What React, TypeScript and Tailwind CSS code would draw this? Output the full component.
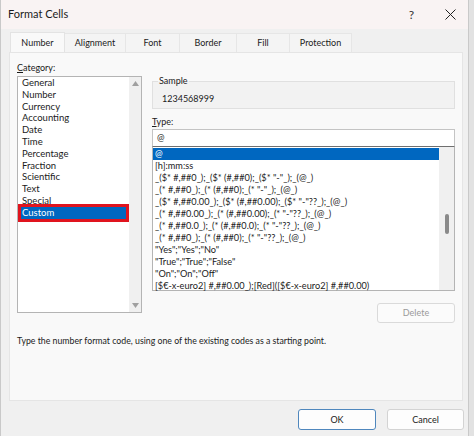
import React from "react";

const categories = [
  "General",
  "Number",
  "Currency",
  "Accounting",
  "Date",
  "Time",
  "Percentage",
  "Fraction",
  "Scientific",
  "Text",
  "Special",
  "Custom",
];

const formats = [
  "@",
  "[h]:mm:ss",
  '_($* #,##0_);_($* (#,##0);_($* "-"_);_(@_)',
  '_(* #,##0_);_(* (#,##0);_(* "-"_);_(@_)',
  '_($* #,##0.00_);_($* (#,##0.00);_($* "-"??_);_(@_)',
  '_(* #,##0.00_);_(* (#,##0.00);_(* "-"??_);_(@_)',
  '_(* #,##0.0_);_(* (#,##0.0);_(* "-"??_);_(@_)',
  '_(* #,##0_);_(* (#,##0);_(* "-"??_);_(@_)',
  '"Yes";"Yes";"No"',
  '"True";"True";"False"',
  '"On";"On";"Off"',
  "[$€-x-euro2] #,##0.00_);[Red]([$€-x-euro2] #,##0.00)",
];

const tabs = ["Number", "Alignment", "Font", "Border", "Fill", "Protection"];
const tabWidths = ["w-[55px]", "w-[61px]", "w-[54px]", "w-[57px]", "w-[53px]", "w-[62px]"];

export default function App() {
  return (
    <div className="w-[474px] h-[436px] bg-[#e2e2e2] flex overflow-hidden font-['Lato','Liberation_Sans',sans-serif] text-[#1b1b1b]">
      <div className="w-[469px] h-full flex flex-col border-l border-r border-[#c9c9c9] bg-[#f0f0f0]">
        {/* title bar */}
        <div className="h-[29px] flex items-center justify-between bg-[#f9f3f3] pl-[7px] pr-[12px]">
          <span className="text-[11px]">Format Cells</span>
          <div className="flex items-center gap-[31px]">
            <span className="text-[12px] text-[#333]">?</span>
            <svg width="11" height="11" viewBox="0 0 11 11">
              <path d="M0.5 0.5 L10.5 10.5 M10.5 0.5 L0.5 10.5" stroke="#222" strokeWidth="1" />
            </svg>
          </div>
        </div>

        {/* tabs */}
        <div className="flex pl-[9px] mt-[3px] h-[20px] items-end">
          {tabs.map((t, i) => (
            <div
              key={t}
              className={
                i === 0
                  ? `${tabWidths[i]} h-[20px] bg-[#f9f9f9] border border-b-0 border-[#e3e3e3] flex items-center justify-center text-[9px]`
                  : `${tabWidths[i]} h-[19px] bg-[#f4f4f4] border-t border-r border-[#e6e6e6] flex items-center justify-center text-[9px]`
              }
            >
              {t}
            </div>
          ))}
        </div>

        {/* panel */}
        <div className="ml-[8px] w-[454px] h-[349px] bg-[#f9f9f9] border border-[#e5e5e5] flex flex-col px-[7px]">
          <div className="flex gap-[10px] mt-[8px]">
            {/* left column */}
            <div className="w-[125px] flex flex-col">
              <span className="text-[9px] leading-[14px]">
                <span className="underline">C</span>ategory:
              </span>
              <div className="mt-[1px] h-[237px] bg-white border border-[#b4b4b4] flex">
                <div className="flex-1 flex flex-col pl-[3px] pr-[3px]">
                  {categories.map((c) => (
                    <div
                      key={c}
                      className={
                        c === "Custom"
                          ? "h-[11.8px] leading-[11.8px] text-[9.5px] bg-[#0067c0] text-white pl-[1px] outline-[3px] outline-solid outline-[#e0141e]"
                          : "h-[11.8px] leading-[11.8px] text-[9.5px] pl-[1px]"
                      }
                    >
                      {c}
                    </div>
                  ))}
                </div>
                <div className="w-[12px] bg-[#f0f0f0] flex flex-col items-center justify-between py-[4px]">
                  <svg width="7" height="5" viewBox="0 0 7 5">
                    <path d="M3.5 0 L7 5 L0 5 Z" fill="#a0a0a0" />
                  </svg>
                  <svg width="7" height="5" viewBox="0 0 7 5">
                    <path d="M0 0 L7 0 L3.5 5 Z" fill="#a0a0a0" />
                  </svg>
                </div>
              </div>
            </div>

            {/* right column */}
            <div className="w-[303px] flex flex-col">
              <fieldset className="mt-[15px] h-[33px] border border-[#e0e0e0] bg-[#f2f2f2] px-[9px]">
                <legend className="text-[9px] px-[1px] -ml-[4px] leading-[10px]">Sample</legend>
                <div className="text-[9px] leading-[12px] mt-[7px]">1234568999</div>
              </fieldset>
              <span className="mt-[6px] text-[9px] leading-[14px]">
                <span className="underline">T</span>ype:
              </span>
              <div className="h-[18px] bg-white border border-[#c4c4c4] border-b-[#6f6f6f] flex items-center px-[4px] text-[9px]">
                @
              </div>
              <div className="h-[144px] bg-white border border-t-0 border-[#b4b4b4] flex">
                <div className="flex-1 pt-[1px] flex flex-col">
                  {formats.map((f, i) => (
                    <div
                      key={i}
                      className={
                        i === 0
                          ? "h-[12px] leading-[12px] text-[9.2px] bg-[#0067c0] text-white pl-[2px] whitespace-nowrap"
                          : "h-[12px] leading-[12px] text-[9.2px] pl-[2px] whitespace-nowrap"
                      }
                    >
                      {f}
                    </div>
                  ))}
                </div>
                <div className="w-[15px] bg-[#f0f0f0] flex justify-center">
                  <div className="mt-[67px] w-[4px] h-[20px] rounded-[2px] bg-[#8a8a8a]" />
                </div>
              </div>
              <div className="mt-[12px] self-end w-[78px] h-[20px] border border-[#dadada] rounded-[3px] bg-[#fbfbfb] flex items-center justify-center text-[9px] text-[#9a9a9a]">
                Delete
              </div>
            </div>
          </div>
          <p className="mt-[12px] text-[8.75px] leading-[12px]">
            Type the number format code, using one of the existing codes as a starting point.
          </p>
        </div>

        {/* footer */}
        <div className="flex justify-end gap-[11px] pr-[4px] mt-[8px]">
          <div className="w-[78px] h-[21px] rounded-[3px] border border-[#4f87bd] bg-[#fdfdfd] flex items-center justify-center text-[9px]">
            OK
          </div>
          <div className="w-[77px] h-[21px] rounded-[3px] border border-[#d3d3d3] bg-[#fdfdfd] flex items-center justify-center text-[9px]">
            Cancel
          </div>
        </div>
      </div>
    </div>
  );
}
